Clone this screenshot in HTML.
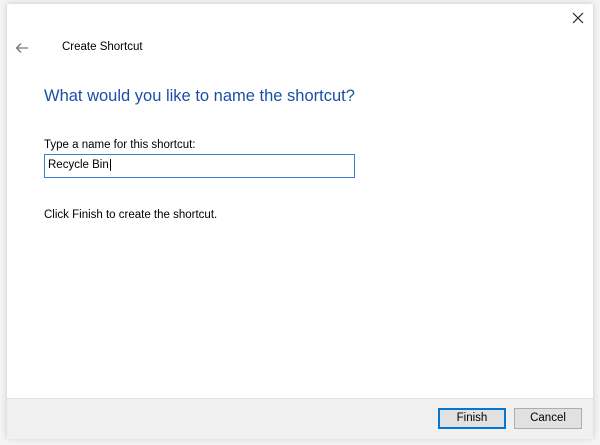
<!DOCTYPE html><html><head><style>
body{margin:0;width:600px;height:445px;background:#f4f4f4;position:relative;overflow:hidden;font-family:"Segoe UI","Liberation Sans",sans-serif;}
.win{position:absolute;left:7px;top:4px;width:586px;height:434px;background:#fff;box-shadow:0 0 6px rgba(0,0,0,.18);}
.t{position:absolute;font-size:11.5px;color:#000;white-space:nowrap}
.foot{position:absolute;left:0;top:394px;width:586px;height:40px;background:#f0f0f0;border-top:1px solid #dfdfdf}
.btn{position:absolute;top:9px;height:19px;width:66px;background:#e1e1e1;border:1px solid #adadad;font-size:11.5px;text-align:center;line-height:19px}
</style></head><body>
<div class="win">
<svg style="position:absolute;left:565px;top:8px" width="12" height="12"><path d="M1 1L11 11M11 1L1 11" stroke="#222" stroke-width="1.2"/></svg>
<svg style="position:absolute;left:8px;top:38px" width="14" height="12"><path d="M13 6H2M6 1.5L1.5 6L6 10.5" stroke="#777" stroke-width="1.3" fill="none"/></svg>
<div class="t" style="left:55px;top:37px">Create Shortcut</div>
<div class="t" style="left:37px;top:83px;font-size:16.5px;color:#1a4fa8">What would you like to name the shortcut?</div>
<div class="t" style="left:37px;top:135px">Type a name for this shortcut:</div>
<div style="position:absolute;left:37px;top:150px;width:309px;height:22px;border:1px solid #3c7fd1;"><span class="t" style="left:3px;top:4px">Recycle Bin<span style="border-left:1px solid #000;margin-left:1px"></span></span></div>
<div class="t" style="left:37px;top:205px">Click Finish to create the shortcut.</div>
<div class="foot">
<div class="btn" style="left:431px;border:1px solid #0078d7;box-shadow:inset 0 0 0 1px #0078d7">Finish</div>
<div class="btn" style="left:507px">Cancel</div>
</div>
</div>
</body></html>
